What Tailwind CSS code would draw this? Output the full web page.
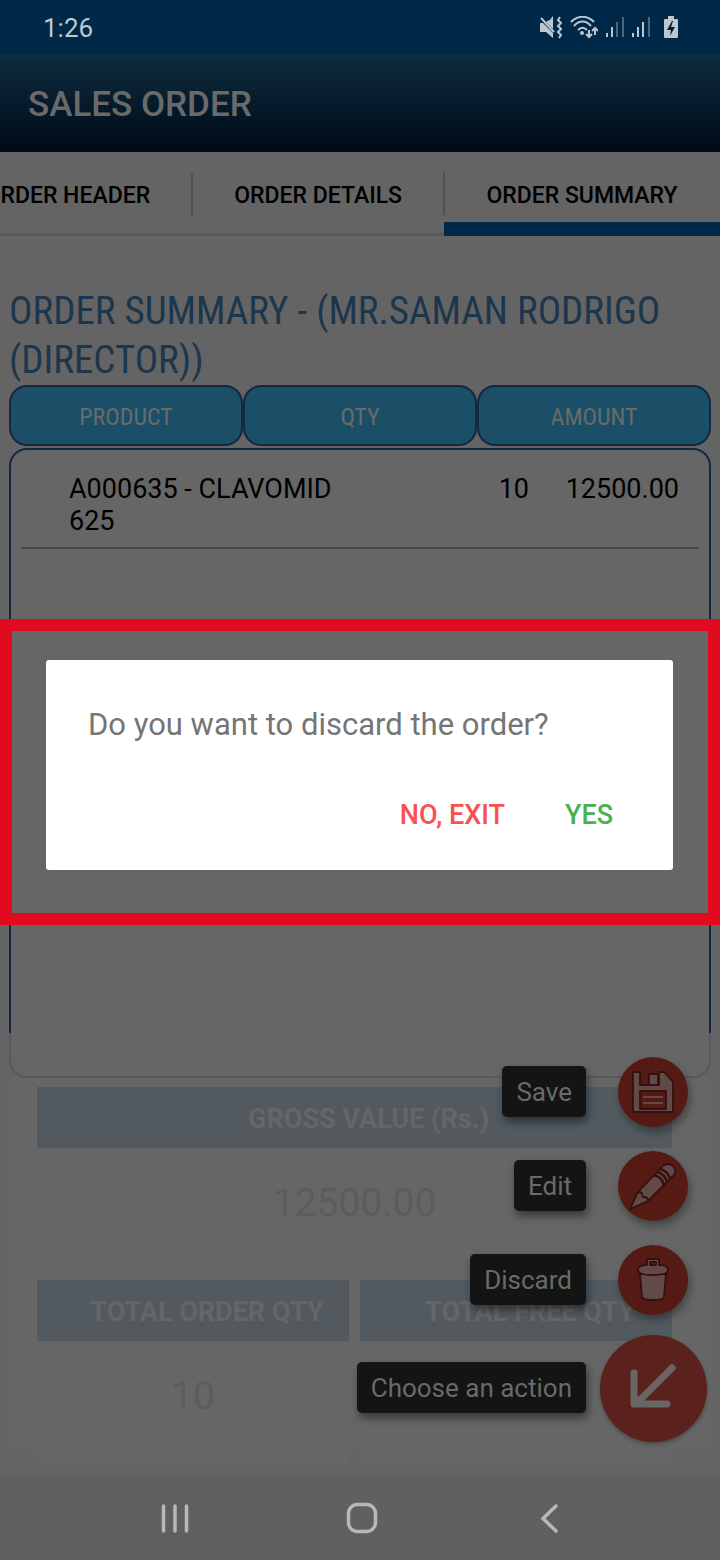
<!DOCTYPE html>
<html lang="en">
<head>
<meta charset="utf-8">
<meta name="viewport" content="width=device-width, initial-scale=1">
<title>Sales Order</title>
<script src="https://cdn.jsdelivr.net/npm/@tailwindcss/browser@4"></script>
</head>
<body class="relative flex min-h-screen flex-col overflow-x-hidden bg-[#646464] font-['Roboto',sans-serif] text-black">

<!-- Status bar -->
<div class="flex h-[54px] items-center justify-between bg-[#002849] pt-[2px] pr-[41px] pl-[43px] text-[#bcc7d0]">
  <span class="text-[26px] leading-8">1:26</span>
  <div class="flex items-center gap-2">
    <svg class="h-6 w-[22px]" viewBox="0 0 22 24" fill="currentColor" aria-hidden="true">
      <path d="M0 7h3l10 10v5l-7-6H0z"/>
      <path d="M6 6l7 7V7l-4-3z" />
      <path d="M13 0v9l-4-4z"/>
      <path d="M1 2l13 14" stroke="currentColor" stroke-width="2"/>
      <path d="M20 1l-2 3 3 3-3 3 3 3-3 3 3 3-2 3" fill="none" stroke="currentColor" stroke-width="2"/>
    </svg>
    <svg class="h-6 w-7" viewBox="0 0 28 24" fill="none" stroke="currentColor" stroke-width="2" aria-hidden="true">
      <path d="M1 6C8-1 17-1 24 6M4 10c5-6 12-6 17 0M8 14c3-3 6-3 9 0"/>
      <circle cx="12" cy="17" r="2" fill="currentColor" stroke="none"/>
      <path d="M19 14v7M16 18l3 3 3-3M25 19v-7M22 15l3-3 3 3"/>
    </svg>
    <svg class="h-6 w-[18px]" viewBox="0 0 18 24" fill="currentColor" aria-hidden="true">
      <path d="M0 17h2v4H0zM5 11h2v10H5z"/><path opacity=".4" d="M10 6h2v15h-2zM16 1h2v20h-2z"/>
    </svg>
    <svg class="h-6 w-[18px]" viewBox="0 0 18 24" fill="currentColor" aria-hidden="true">
      <path d="M0 17h2v4H0zM5 11h2v10H5zM10 6h2v15h-2z"/><path opacity=".4" d="M16 1h2v20h-2z"/>
    </svg>
    <svg class="ml-[6px] h-6 w-[15px]" viewBox="0 0 15 24" aria-hidden="true">
      <path fill="currentColor" d="M4 0h6v3h3a1 1 0 0 1 1 1v17a1 1 0 0 1-1 1H1a1 1 0 0 1-1-1V4a1 1 0 0 1 1-1h3z"/>
      <path fill="#0a1c2b" d="M8 5l-5 9h4l-1 6 5-9H7l2-6z"/>
    </svg>
  </div>
</div>

<header class="flex h-[98px] items-center bg-linear-to-b from-[#0f2e41] via-[#061b2b] to-[#000b16] px-7 pt-1">
  <h1 class="text-[35px] leading-10 font-medium text-[#6a6a6a]">SALES ORDER</h1>
</header>

<nav class="flex h-[84px] justify-end overflow-x-clip border-b-3 border-[#5a5a5a] text-[23px] font-medium whitespace-nowrap" role="tablist">
  <button role="tab" class="shrink-0 pr-[41px] pt-2">ORDER HEADER</button>
  <span class="mt-[21px] -mr-[2px] h-[42px] w-[2px] shrink-0 bg-[#505050]"></span>
  <button role="tab" class="shrink-0 pr-[41px] pl-[43px] pt-2">ORDER DETAILS</button>
  <span class="mt-[21px] -mr-px h-[42px] w-[2px] shrink-0 bg-[#505050]"></span>
  <button role="tab" aria-selected="true" class="relative min-w-[276px] shrink-0 px-[42px] pt-2">ORDER SUMMARY
    <span class="absolute inset-x-0 -bottom-[3px] h-[14px] bg-[#002849]"></span>
  </button>
</nav>

<main class="px-[9px] pt-[51px]">
  <h2 class="font-['Roboto_Condensed',sans-serif] text-[39px] leading-[49px] text-[#1c364d]">ORDER SUMMARY - (MR.SAMAN RODRIGO<br>(DIRECTOR))</h2>

  <table class="block">
    <thead class="block font-['Roboto_Condensed',sans-serif] text-[24px] leading-[53px] text-[#6a6a6a]">
      <tr class="grid grid-cols-3">
        <th scope="col" class="rounded-[18px] border-2 border-[#14293f] bg-[#1b4f67] pt-1 font-normal">PRODUCT</th>
        <th scope="col" class="rounded-[18px] border-2 border-[#14293f] bg-[#1b4f67] pt-1 font-normal">QTY</th>
        <th scope="col" class="rounded-[18px] border-2 border-[#14293f] bg-[#1b4f67] pt-1 font-normal">AMOUNT</th>
      </tr>
    </thead>
    <tbody class="mt-[2px] block h-[585px] rounded-t-[18px] border-2 border-b-0 border-[#14293f] bg-[#666] px-[10px] pt-[23px] text-[27px] leading-8">
      <tr class="grid grid-cols-[1fr_150px_150px] border-b-2 border-[#494949] pr-5 pb-[10px] pl-12">
        <td class="max-w-[270px]">A000635 - CLAVOMID 625</td>
        <td class="text-right">10</td>
        <td class="text-right">12500.00</td>
      </tr>
    </tbody>
  </table>
  <div class="h-[45px] rounded-b-[18px] border-2 border-t-0 border-[#535a60] bg-[#666]"></div>

  <section class="h-[371px] bg-[#666] pt-[9px] pr-[39px] pl-7 text-center">
    <h3 class="bg-[#525a60] pt-1 pl-7 text-[27px] leading-[57px] font-bold text-[#666]">GROSS VALUE (Rs.)</h3>
    <p class="pt-8 text-[39px] leading-[47px] text-[#5c5c5c]">12500.00</p>
    <div class="mt-[53px] grid grid-cols-2 gap-[11px]">
      <div class="h-[184px] rounded-b-sm bg-[#666]">
        <h3 class="bg-[#525a60] pt-1 pl-7 text-[27px] leading-[57px] font-bold text-[#666]">TOTAL ORDER QTY</h3>
        <p class="pt-8 text-[39px] leading-[47px] text-[#5c5c5c]">10</p>
      </div>
      <div class="h-[184px] rounded-b-sm bg-[#666]">
        <h3 class="bg-[#525a60] pt-1 pl-7 text-[27px] leading-[57px] font-bold text-[#666]">TOTAL FREE QTY</h3>
      </div>
    </div>
  </section>
</main>

<!-- System navigation -->
<nav class="mt-auto flex h-[84px] items-center justify-between bg-[#606060] pr-[153px] pl-[157px] text-[#b8b8b8]">
  <button aria-label="Recent apps"><svg class="size-9" viewBox="0 0 36 36" fill="none" stroke="currentColor" stroke-width="3.5" stroke-linecap="round"><path d="M6.5 6v25M18 6v25M29.5 6v25"/></svg></button>
  <button aria-label="Home"><svg class="size-9" viewBox="0 0 36 36" fill="none" stroke="currentColor" stroke-width="3.5"><rect x="4.5" y="4.5" width="27" height="27" rx="9"/></svg></button>
  <button aria-label="Back"><svg class="size-9" viewBox="0 0 36 36" fill="none" stroke="currentColor" stroke-width="3.5" stroke-linecap="round"><path d="M25 6L12 18.5 25 31"/></svg></button>
</nav>

<!-- Speed-dial actions -->
<div class="absolute right-[13px] bottom-[118px] flex flex-col text-[26px] leading-[49px] text-[#6a6a6a]">
  <button class="mb-6 flex items-center justify-end gap-[14px]">
    <span class="mb-px rounded-[5px] bg-[#141414] px-[14px] pt-[2px] shadow-[2px_5px_8px_rgba(0,0,0,0.45)]">Save</span>
    <span class="flex w-[107px] pl-[18px]"><span class="flex size-[70px] items-center justify-center rounded-full bg-[#561a14] shadow-[2px_5px_8px_rgba(0,0,0,0.35)]">
      <svg class="size-11" viewBox="0 0 44 44" fill="#614a48" stroke="#36100e" stroke-width="1.8" stroke-linejoin="round" aria-hidden="true">
        <path d="M3 2h5q1 0 1 1v12h19V2h5l9 10v29q0 1-1 1H3q-1 0-1-1V3q0-1 1-1z"/>
        <path fill="#561a14" stroke="none" d="M10 2h17v12H10z"/>
        <path d="M18 4h9v11h-9z"/>
        <path fill="#561a14" d="M9 21h26v18H9z"/>
        <path stroke="#614a48" stroke-width="2" d="M12 27h20M12 33h20"/>
      </svg>
    </span></span>
  </button>
  <button class="mb-6 flex items-center justify-end gap-[14px]">
    <span class="mb-px rounded-[5px] bg-[#141414] px-[14px] pt-[2px] shadow-[2px_5px_8px_rgba(0,0,0,0.45)]">Edit</span>
    <span class="flex w-[107px] pl-[18px]"><span class="flex size-[70px] items-center justify-center rounded-full bg-[#561a14] shadow-[2px_5px_8px_rgba(0,0,0,0.35)]">
      <svg class="size-12" viewBox="0 0 48 48" fill="#614a48" stroke="#36100e" stroke-width="1.8" stroke-linejoin="round" aria-hidden="true">
        <path d="M1 47L9 30 34 4Q38 0 44 4 48 9 45 13L19 39z"/>
        <path d="M9 30q3 0 4 1 0 3 1 4 3 0 4 1 1 1 1 3" fill="none"/>
        <path d="M25 13Q33 15 35 23M28 10Q36 12 38 20M31 7Q39 9 41 17" fill="none" stroke-width="2.4"/>
      </svg>
    </span></span>
  </button>
  <button class="mb-5 flex items-center justify-end gap-[14px]">
    <span class="mb-px rounded-[5px] bg-[#141414] px-[14px] pt-[2px] shadow-[2px_5px_8px_rgba(0,0,0,0.45)]">Discard</span>
    <span class="flex w-[107px] pl-[18px]"><span class="flex size-[70px] items-center justify-center rounded-full bg-[#561a14] shadow-[2px_5px_8px_rgba(0,0,0,0.35)]">
      <svg class="size-11" viewBox="0 0 44 44" fill="#614a48" stroke="#36100e" stroke-width="1.8" stroke-linejoin="round" aria-hidden="true">
        <path d="M9 16l2 23c1 4 21 4 22 0l2-23z"/>
        <path d="M7 12q0-5 9-5V1h12v6q9 0 9 5 0 5-15 5T7 12z"/>
        <path d="M19 4h6v3h-6z" fill="#561a14"/>
      </svg>
    </span></span>
  </button>
  <button class="flex items-center justify-end gap-[14px]">
    <span class="mb-[2px] rounded-[5px] bg-[#141414] px-[14px] pt-[2px] shadow-[2px_5px_8px_rgba(0,0,0,0.45)]">Choose an action</span>
    <span class="flex size-[107px] items-center justify-center rounded-full bg-[#5b211d] shadow-[0_2px_4px_rgba(0,0,0,0.3)]">
      <svg class="size-[50px]" viewBox="0 0 50 50" fill="none" stroke="#696765" stroke-width="7" stroke-linecap="round" stroke-linejoin="round" aria-hidden="true"><path d="M43 4L7 40M5 9v31h33"/></svg>
    </span>
  </button>
</div>

<!-- Confirmation dialog in its highlight frame -->
<div class="pointer-events-none absolute inset-0 flex items-center pb-4">
  <div class="pointer-events-auto w-full border-12 border-[#e20a1e] bg-[#666] pt-[29px] pr-[35px] pb-[43px] pl-[34px]">
    <div role="dialog" aria-labelledby="question" class="flex h-[210px] flex-col justify-between rounded-[3px] bg-white pt-[45px] pr-11 pb-[35px] pl-[42px]">
      <p id="question" class="text-[31px] leading-10 text-[#757575]">Do you want to discard the order?</p>
      <div class="flex justify-end gap-7 text-[27px] leading-10 font-medium">
        <button class="px-4 text-[#fc5050]">NO, EXIT</button>
        <button class="px-4 text-[#4caf50]">YES</button>
      </div>
    </div>
  </div>
</div>
</body>
</html>
